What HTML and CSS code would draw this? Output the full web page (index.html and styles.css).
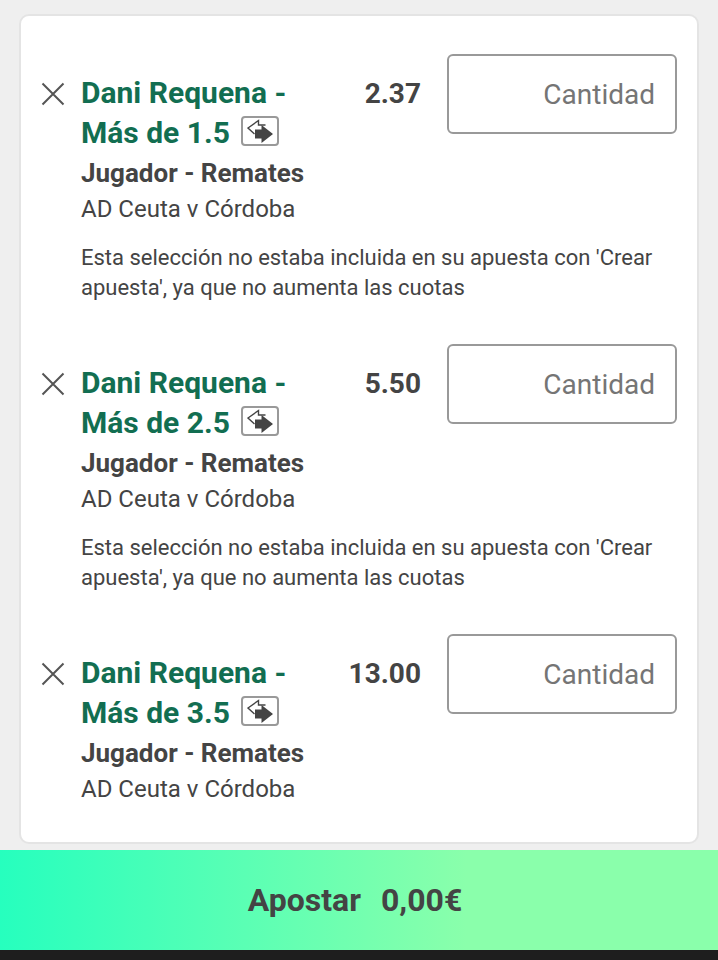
FILE: index.html
```html
<!DOCTYPE html>
<html lang="es">
<head>
    <meta charset="UTF-8">
    <meta name="viewport" content="width=device-width, initial-scale=1">
    <title>Apuestas</title>
    <link rel="stylesheet" href="styles.css">
</head>
<body>

<svg class="sprite" aria-hidden="true">
    <symbol id="icon-close" viewBox="0 0 24 24">
        <path d="M1.5 1.5L22.5 22.5M22.5 1.5L1.5 22.5" fill="none" stroke="#555" stroke-width="2"/>
    </symbol>
    <symbol id="icon-swap" viewBox="2 2 34 26">
        <path d="M24.500 9H17.500V4.500L7 12L13.500 18" fill="none" stroke="#444" stroke-width="1.400"/>
        <path d="M14 13.500H20.500V9L32 18L20.500 27V22.500H14Z" fill="#444"/>
    </symbol>
</svg>

<form class="betslip">
    <main class="card">
        <div class="bet">
            <button type="button" class="remove" aria-label="Eliminar"><svg><use href="#icon-close"/></svg></button>
            <div class="info">
                <h2 class="name">Dani Requena - Más de 1.5 <svg class="swap"><use href="#icon-swap"/></svg></h2>
                <div class="market">Jugador - Remates</div>
                <div class="event">AD Ceuta v Córdoba</div>
            </div>
            <div class="odds">2.37</div>
            <input class="stake" type="text" inputmode="decimal" placeholder="Cantidad" aria-label="Cantidad">
            <p class="note">Esta selección no estaba incluida en su apuesta con 'Crear apuesta', ya que no aumenta las cuotas</p>
        </div>
        <div class="bet">
            <button type="button" class="remove" aria-label="Eliminar"><svg><use href="#icon-close"/></svg></button>
            <div class="info">
                <h2 class="name">Dani Requena - Más de 2.5 <svg class="swap"><use href="#icon-swap"/></svg></h2>
                <div class="market">Jugador - Remates</div>
                <div class="event">AD Ceuta v Córdoba</div>
            </div>
            <div class="odds">5.50</div>
            <input class="stake" type="text" inputmode="decimal" placeholder="Cantidad" aria-label="Cantidad">
            <p class="note">Esta selección no estaba incluida en su apuesta con 'Crear apuesta', ya que no aumenta las cuotas</p>
        </div>
        <div class="bet">
            <button type="button" class="remove" aria-label="Eliminar"><svg><use href="#icon-close"/></svg></button>
            <div class="info">
                <h2 class="name">Dani Requena - Más de 3.5 <svg class="swap"><use href="#icon-swap"/></svg></h2>
                <div class="market">Jugador - Remates</div>
                <div class="event">AD Ceuta v Córdoba</div>
            </div>
            <div class="odds">13.00</div>
            <input class="stake" type="text" inputmode="decimal" placeholder="Cantidad" aria-label="Cantidad">
        </div>
    </main>
    <button type="submit" class="place-bet"><span>Apostar</span><span>0,00€</span></button>
</form>

</body>
</html>
```
FILE: styles.css
```css
* {
    box-sizing: border-box;
}
body {
    margin: 0;
    background: #1e1e1e;
    color: #444;
    font-family: Roboto, "Liberation Sans", sans-serif;
}
h2, p {
    margin: 0;
}
.sprite {
    display: none;
}
.betslip {
    padding-top: 14px;
    background: #efefef;
}
.card {
    display: flex;
    flex-direction: column;
    gap: 41px;
    margin: 0 19px 6px;
    padding: 38px 20px 37px;
    background: #fff;
    border: 2px solid #e4e4e4;
    border-radius: 10px;
}

/* one selection */
.bet {
    display: grid;
    grid-template-columns: 24px 1fr auto 230px;
    align-items: start;
}
.remove {
    width: 24px;
    height: 24px;
    margin-top: 28px;
    padding: 0;
    border: 0;
    background: none;
    cursor: pointer;
}
.remove svg {
    display: block;
    width: 24px;
    height: 24px;
}
.info {
    padding: 19px 0 0 16px;
}
.name {
    max-width: 250px;
    color: #126e51;
    font-size: 30px;
    font-weight: bold;
    line-height: 40px;
}
.swap {
    width: 38px;
    height: 30px;
    margin-left: 4px;
    border: 2px solid #999;
    border-radius: 4px;
    vertical-align: -3px;
}
.market {
    font-size: 26px;
    font-weight: bold;
    line-height: 40px;
}
.event {
    font-size: 24px;
    line-height: 32px;
}
.odds {
    padding: 20px 26px 0 0;
    font-size: 28px;
    font-weight: bold;
    line-height: 40px;
}
.stake {
    width: 100%;
    height: 80px;
    padding: 0 20px;
    border: 2px solid #999;
    border-radius: 6px;
    background: #fff;
    color: #444;
    font: inherit;
    font-size: 28px;
    text-align: right;
}
.stake::placeholder {
    color: #757575;
}
.note {
    grid-column: 2 / -1;
    padding: 18px 0 0 16px;
    font-size: 22px;
    line-height: 30px;
}

.place-bet {
    display: flex;
    justify-content: center;
    align-items: center;
    gap: 20px;
    width: 100%;
    height: 100px;
    padding: 0 8px 0 0;
    border: 0;
    background: linear-gradient(to right, #26ffbe, #8affab 65%);
    color: #444;
    font: inherit;
    font-size: 32px;
    font-weight: bold;
    cursor: pointer;
}
```
